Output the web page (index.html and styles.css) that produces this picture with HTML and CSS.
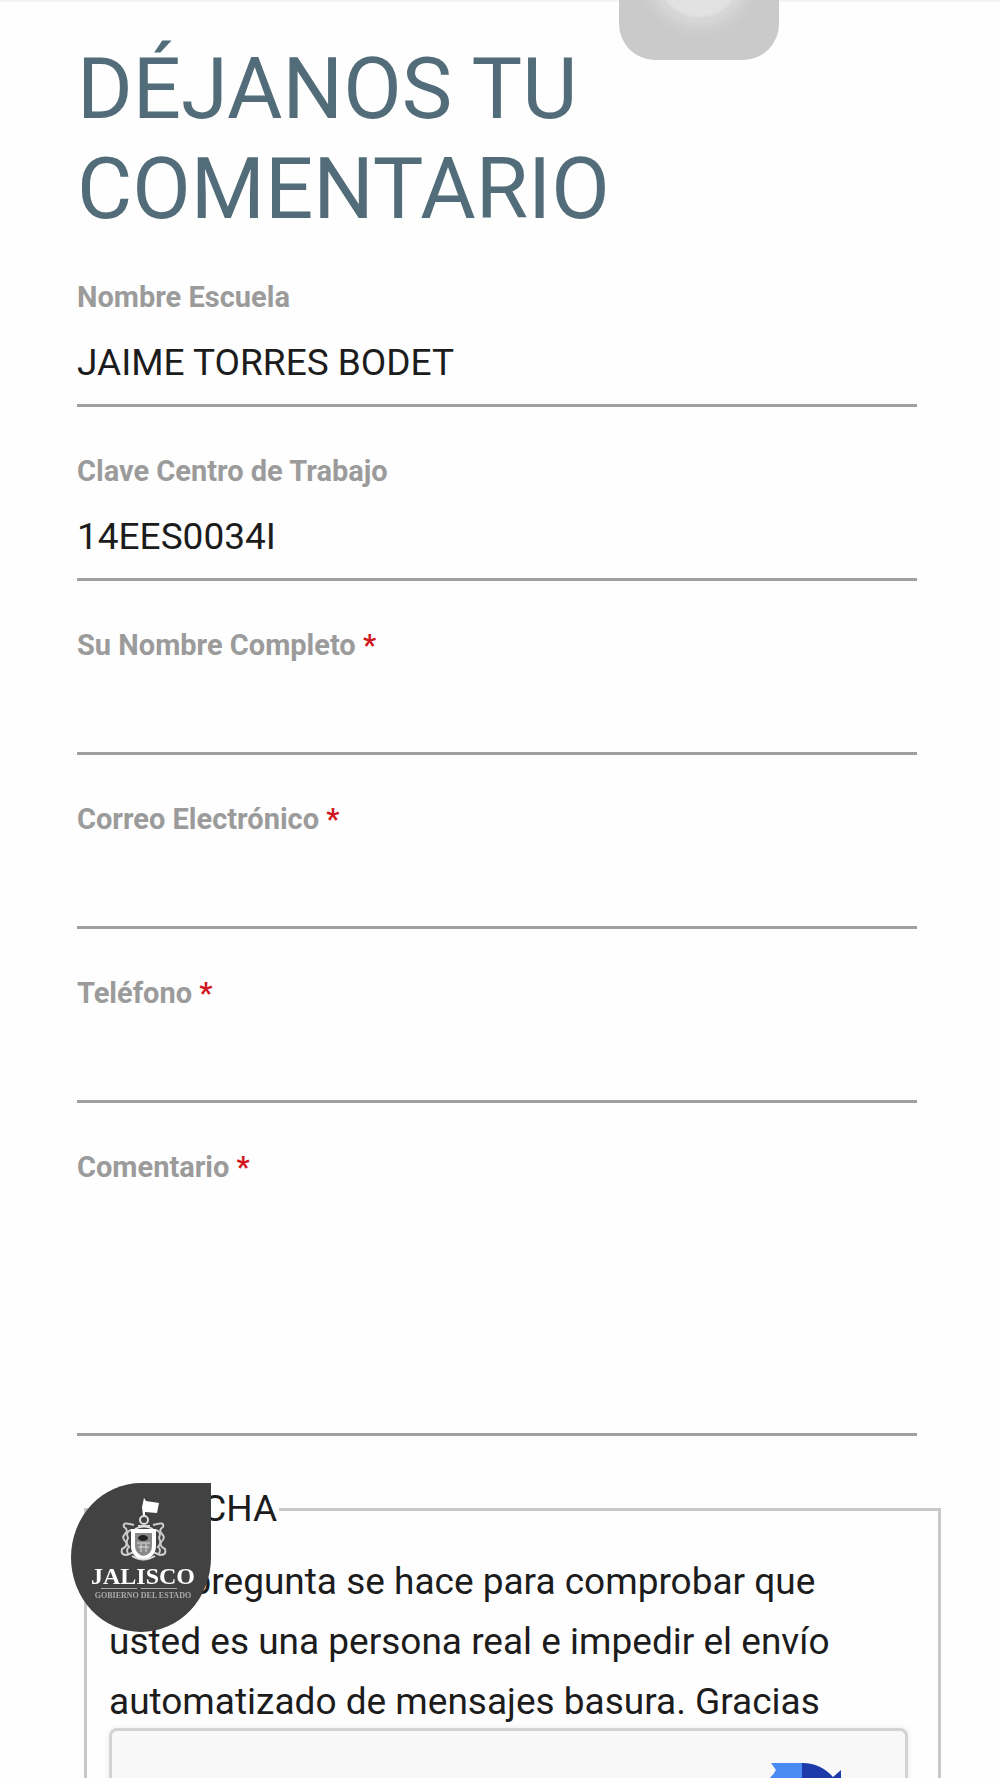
FILE: index.html
```
<!DOCTYPE html>
<html lang="es">
<head>
	<meta charset="utf-8">
	<meta name="viewport" content="width=device-width, initial-scale=1">
	<title>Déjanos tu comentario</title>
	<link rel="stylesheet" href="styles.css">
</head>
<body>
	<button class="assist" type="button" aria-label="Menú"></button>

	<main class="page">
		<h1 class="title">DÉJANOS TU COMENTARIO</h1>

		<form class="form">
			<div class="field">
				<label for="escuela">Nombre Escuela</label>
				<input type="text" id="escuela" value="JAIME TORRES BODET">
			</div>
			<div class="field">
				<label for="clave">Clave Centro de Trabajo</label>
				<input type="text" id="clave" value="14EES0034I">
			</div>
			<div class="field">
				<label for="nombre">Su Nombre Completo <span class="required">*</span></label>
				<input type="text" id="nombre">
			</div>
			<div class="field">
				<label for="correo">Correo Electrónico <span class="required">*</span></label>
				<input type="email" id="correo">
			</div>
			<div class="field">
				<label for="telefono">Teléfono <span class="required">*</span></label>
				<input type="tel" id="telefono">
			</div>
			<div class="field">
				<label for="comentario">Comentario <span class="required">*</span></label>
				<textarea id="comentario"></textarea>
			</div>

			<fieldset class="captcha">
				<legend>CAPTCHA</legend>
				<p>Esta pregunta se hace para comprobar que usted es una persona real e impedir el envío automatizado de mensajes basura. Gracias</p>
				<div class="recaptcha">
					<svg class="recaptcha-logo" viewBox="0 0 72 84" aria-hidden="true">
						<path fill="#4a8af4" d="M2 0H33V18C25 18 20 22 17 28L0 16Q5 11 7 7Z"/>
						<path fill="#1c3aa9" d="M33 0C47 0 57 6 64 14L72 7V42H38L48 31C45 23 40 18 33 18Z"/>
						<path fill="#ababab" d="M0 16V42C0 65 16 78 36 78C49 78 58 73 65 64L51 52C38 66 18 58 18 42H30Z"/>
					</svg>
				</div>
			</fieldset>
		</form>
	</main>

	<a class="badge" href="#" aria-label="Jalisco, Gobierno del Estado">
		<svg viewBox="0 0 140 149">
			<!-- flag -->
			<path fill="#fff" d="M71 24l2-9 2 3 13 2-2 10-12-1v4h-2z"/>
			<!-- helmet and crest -->
			<circle cx="73" cy="37" r="4" fill="none" stroke="#ddd" stroke-width="2"/>
			<path fill="none" stroke="#ddd" stroke-width="2" d="M67 43h12M64 46q9-5 18 0"/>
			<!-- mantling -->
			<g fill="none" stroke="#ccc" stroke-width="2">
				<path d="M63 42q-12-4-10 2 5 3 1 7-4 4 1 8 2 4-4 7-2 6 5 6l7-3"/>
				<path d="M82 42q12-4 10 2-5 3-1 7 4 4-1 8-2 4 4 7 2 6-5 6l-7-3"/>
				<path d="M60 47q-6 2-3 8-3 5 1 9-4 3 0 8M85 47q6 2 3 8 3 5-1 9 4 3 0 8"/>
			</g>
			<!-- shield -->
			<path fill="#888" stroke="#fff" stroke-width="4" d="M62 48H83V63C83 69 79 74 72 75C66 74 62 69 62 63Z"/>
			<path fill="none" stroke="#ddd" stroke-width="1" d="M66 60h13M67 64h11M70 61v8M75 61v8"/>
			<ellipse cx="72" cy="55" rx="5" ry="3" fill="#222"/>
			<path fill="none" stroke="#ddd" stroke-width="2" d="M61 73q11 7 23 0"/>
			<text class="badge-name" x="72" y="101">JALISCO</text>
			<path stroke="#aaa" d="M30 105.500H66M70 105.500H106"/>
			<text class="badge-sub" x="72" y="115">GOBIERNO DEL ESTADO</text>
		</svg>
	</a>
</body>
</html>
```
FILE: styles.css
```
* {
	box-sizing: border-box;
}
html {
	scrollbar-width: none;
}
body {
	margin: 0;
	border-top: 2px solid #f3f3f3;
	background: #fefefe; color: #1c1c1c;
	font-family: Roboto, "Liberation Sans", sans-serif;
	font-size: 37px;
}
.page {
	padding: 37px 59px 40px 77px;
}
.title {
	max-width: 640px;
	margin: 0;
	color: #526d79;
	font-size: 85px; font-weight: 400;
	line-height: 100px;
}

/* form */
.form {
	margin-top: -6px;
}
.field {
	display: flex; flex-direction: column;
	height: 174px;
	margin-right: 24px;
	padding-top: 46px;
	border-bottom: 3px solid #a0a0a0;
}
.field:last-of-type {
	height: auto;
}
.field label {
	color: #9b9b9b;
	font-size: 29px; font-weight: 700;
	line-height: 36px;
}
.required {
	color: #d0191f;
}
.field input,
.field textarea {
	width: 100%;
	padding: 0; border: none;
	background: none; color: inherit;
	font: inherit; outline: none;
}
.field input {
	flex: 1;
	padding-top: 6px;
}
.field textarea {
	height: 248px;
	resize: none;
}

/* captcha */
.captcha {
	margin: 50px 0 0 7px;
	padding: 20px 30px 40px 22px;
	border: 3px solid #c8c8c8;
}
.captcha legend {
	padding: 0 2px 0 0;
	line-height: 46px;
}
.captcha p {
	margin: 0 0 -4px;
	line-height: 60px;
}
.recaptcha {
	height: 200px;
	padding: 32px 64px;
	border: 3px solid #d3d3d3; border-radius: 8px;
	background: #f8f8f8;
	box-shadow: 0 0 6px rgba(0, 0, 0, .08);
}
.recaptcha-logo {
	display: block;
	width: 72px; height: 84px;
	margin-left: auto;
}

/* floating items */
.assist {
	position: absolute; z-index: 5;
	left: 619px; top: -100px;
	width: 160px; height: 160px;
	border: none; border-radius: 36px;
	background: radial-gradient(circle at 50% 76px, #e2e2e2 39px, #d6d6d6 43px 46px, #cecece 54px, #cacaca 62px);
}
.badge {
	position: fixed; z-index: 5;
	left: 71px; bottom: 146px;
	width: 140px; height: 149px;
	border-radius: 50% 0 50% 50%;
	background: #424242;
}
.badge svg {
	display: block;
}
.badge-name {
	fill: #fff;
	font: bold 24px "Liberation Serif", serif;
	text-anchor: middle;
}
.badge-sub {
	fill: #aaa;
	font: bold 8px "Liberation Serif", serif;
	text-anchor: middle;
}
```
